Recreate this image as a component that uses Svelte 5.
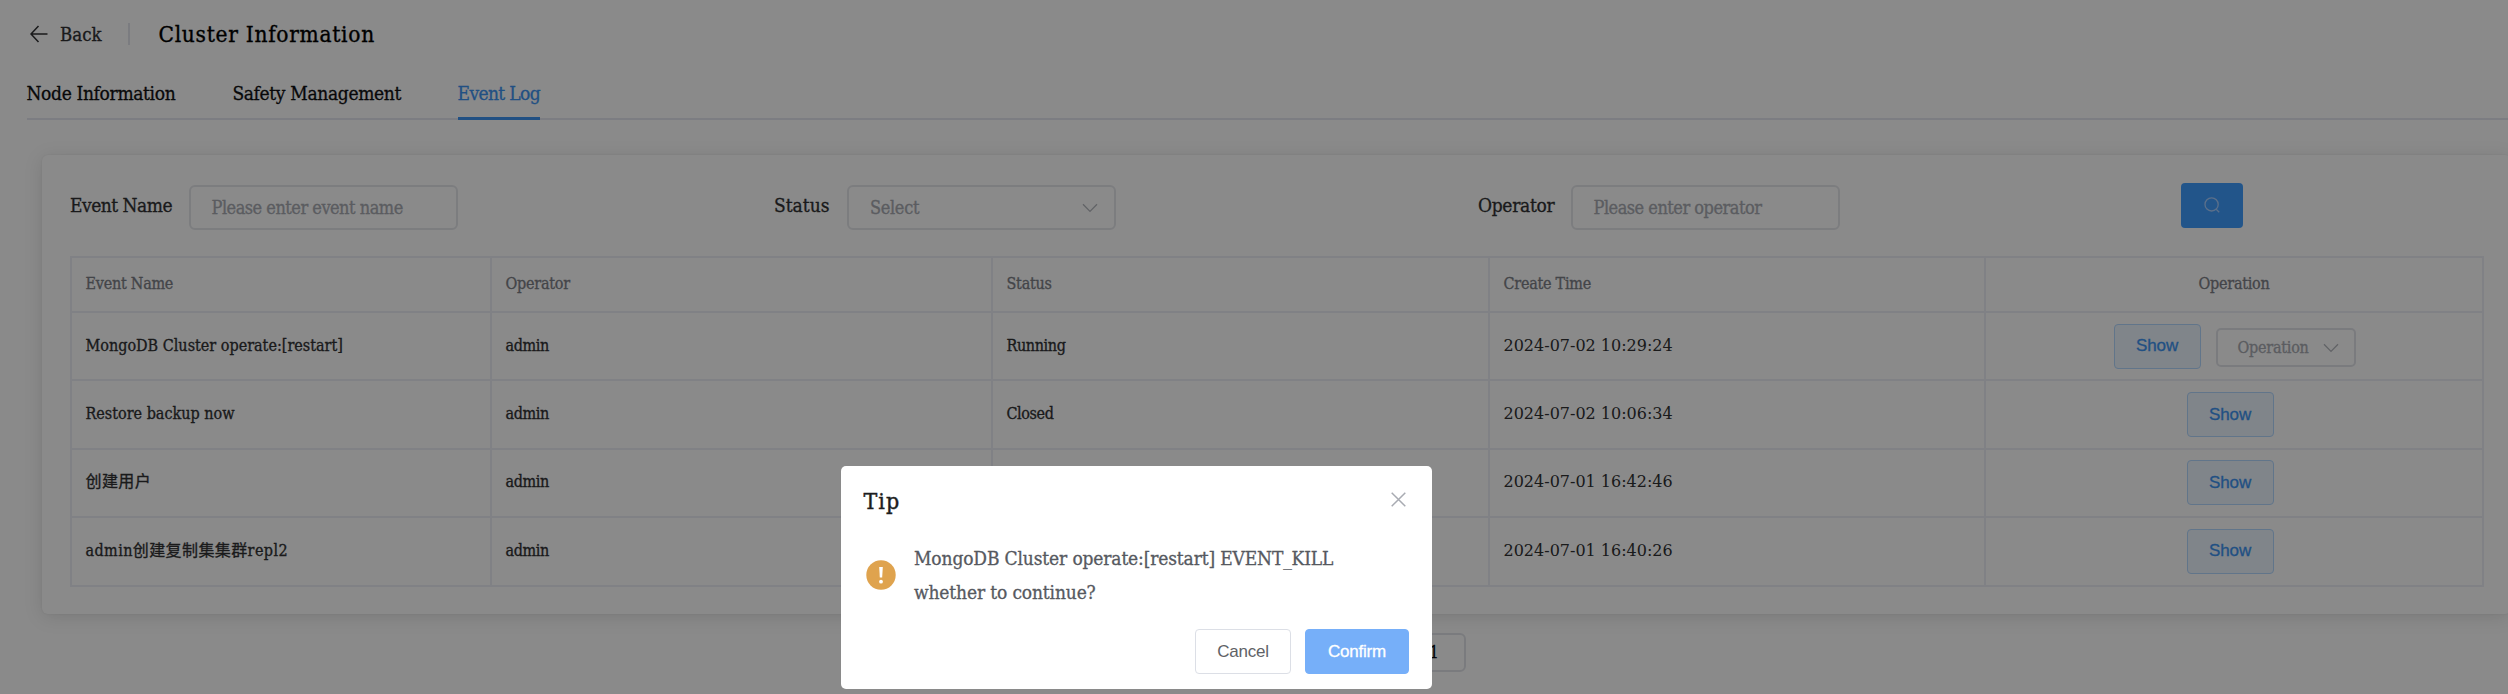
<script>
  const tabs = ['Node Information', 'Safety Management', 'Event Log'];
  const active = 'Event Log';
  const columns = ['Event Name', 'Operator', 'Status', 'Create Time', 'Operation'];
  const events = [
    { name: 'MongoDB Cluster operate:[restart]', operator: 'admin', status: 'Running', time: '2024-07-02 10:29:24', menu: true },
    { name: 'Restore backup now', operator: 'admin', status: 'Closed', time: '2024-07-02 10:06:34' },
    { name: '创建用户', operator: 'admin', time: '2024-07-01 16:42:46', cjk: true },
    { name: 'admin创建复制集集群repl2', operator: 'admin', time: '2024-07-01 16:40:26', cjk: true }
  ];
</script>

{#snippet chevron()}
  <svg class="chevron" viewBox="0 0 16 10"><path d="M1 1.2 8 8.4l7-7.2" /></svg>
{/snippet}

<div class="page">
  <header>
    <svg class="arrow" viewBox="0 0 18 18"><path d="M17.5 9H1M8.5 1 1 9l7.5 8" /></svg>
    <span class="back">Back</span>
    <span class="divider"></span>
    <h1>Cluster Information</h1>
  </header>

  <nav>
    {#each tabs as tab}
      <span class="tab" class:active={tab === active}>{tab}</span>
    {/each}
  </nav>

  <section class="card">
    <div class="filters">
      <div class="field">
        <span class="label name">Event Name</span>
        <div class="box">Please enter event name</div>
      </div>
      <div class="field">
        <span class="label">Status</span>
        <div class="box select">Select {@render chevron()}</div>
      </div>
      <div class="field">
        <span class="label operator">Operator</span>
        <div class="box">Please enter operator</div>
      </div>
      <div class="search">
        <svg viewBox="0 0 16 16"><circle cx="7.6" cy="7.4" r="6.6" /><path d="m12.2 12.2 3 3" /></svg>
      </div>
    </div>

    <div class="table">
      <div class="row head">
        {#each columns as column}<div class="cell">{column}</div>{/each}
      </div>
      {#each events as event}
        <div class="row">
          <div class="cell" class:cjk={event.cjk}>{event.name}</div>
          <div class="cell short">{event.operator}</div>
          <div class="cell short">{event.status ?? ''}</div>
          <div class="cell time">{event.time}</div>
          <div class="cell actions" class:single={!event.menu}>
            <span class="show">Show</span>
            {#if event.menu}
              <span class="menu">Operation {@render chevron()}</span>
            {/if}
          </div>
        </div>
      {/each}
    </div>
  </section>

  <div class="pager"><span>1</span></div>
</div>

<div class="mask">
  <div class="dialog">
    <div class="top">
      <h2>Tip</h2>
      <svg class="close" viewBox="0 0 15 15"><path d="m.7.7 13.6 13.6M14.3.7.7 14.3" /></svg>
    </div>
    <div class="message">
      <svg class="warn" viewBox="0 0 30 30">
        <circle cx="15" cy="15" r="14.7" />
        <path d="M13.2 7h3.6l-.6 10.6h-2.4z" /><circle class="dot" cx="15" cy="21.7" r="1.9" />
      </svg>
      <p>MongoDB Cluster operate:[restart] EVENT_KILL<br />whether to continue?</p>
    </div>
    <div class="buttons">
      <span class="btn">Cancel</span>
      <span class="btn primary">Confirm</span>
    </div>
  </div>
</div>

<style>
  :global(body) { background: #fff; overflow: hidden; }
  * { box-sizing: border-box; }
  svg { display: block; flex: none; fill: none; stroke: currentColor; }
  .page, .mask {
    height: 694px;
    font-family: "DejaVu Serif Condensed", "Noto Sans CJK SC", serif;
    white-space: nowrap;
    -webkit-text-stroke: 0.3px;
  }
  .page { overflow: hidden; color: #303133; }

  header { display: flex; align-items: center; height: 68px; padding-left: 30px; }
  .arrow { width: 18px; height: 18px; stroke-width: 1.5; }
  .back { margin-left: 12px; font-size: 18.5px; width: 57px; }
  .divider { width: 2px; height: 22px; margin-left: 11px; background: #e4e6ec; }
  h1 { margin: 0 0 0 28.5px; font-size: 22.5px; font-weight: 400; letter-spacing: 0.7px; color: #000; -webkit-text-stroke: 0.35px #000; }

  nav { display: flex; gap: 57px; height: 52px; margin-left: 26.5px; border-bottom: 2px solid #e6e8f0; }
  .tab { height: 52px; padding-top: 9px; font-size: 19px; line-height: 32px; letter-spacing: -0.34px; color: #101012; }
  .active { margin-left: -0.5px; color: #3d94f2; letter-spacing: -0.62px; border-bottom: 3px solid #3d94f2; }

  .card {
    width: 2469px; height: 459px; margin: 35px 0 0 42px; padding: 28px 28px 0;
    border-radius: 6px; box-shadow: 0 3px 19px rgba(0, 0, 0, 0.12), 0 0 2px rgba(0, 0, 0, 0.08);
  }
  .filters { display: grid; grid-template-columns: 704px 704px 703px 1fr; align-items: start; height: 73px; }
  .field { display: flex; padding-top: 2px; }
  .label { flex: none; margin: 5px 18px 0 0; font-size: 19px; line-height: 30px; letter-spacing: 0; }
  .label.name { width: 101px; letter-spacing: -0.5px; }
  .label.operator { width: 76px; margin-right: 17px; letter-spacing: -0.3px; }
  .box {
    display: flex; align-items: center; width: 269px; height: 45px; padding: 0 16px 0 20.5px;
    border: 2px solid #e6e7eb; border-radius: 6px;
    font-size: 18px; letter-spacing: -0.5px; color: #a8abb2;
  }
  .select { justify-content: space-between; letter-spacing: -0.3px; }
  .chevron { width: 16px; height: 10px; stroke-width: 1.3; color: #b4b7be; }
  .search {
    display: flex; align-items: center; justify-content: center;
    width: 62px; height: 45px; border-radius: 4px; background: #409eff; color: #a8ceff;
  }
  .search svg { width: 16px; height: 16px; margin-bottom: 2px; stroke-width: 1.3; }

  .table { width: 2414px; border: solid #edeff6; border-width: 2px 0 0 2px; }
  .row { display: grid; grid-template-columns: 420px 501px 497px 496px 498px; height: 68.4px; font-size: 16px; }
  .cell { display: flex; align-items: center; padding: 0 0 2px 13.5px; border: solid #edeff6; border-width: 0 2px 2px 0; }
  .head { height: 55px; color: #7d8087; letter-spacing: -0.25px; }
  .head .cell:last-child { justify-content: center; padding-left: 0; }
  .short { letter-spacing: -0.4px; }
  .cjk { padding-bottom: 5px; letter-spacing: 0.4px; }
  .time { font-family: "DejaVu Serif", serif; -webkit-text-stroke: 0; }
  .actions { justify-content: center; gap: 15px; padding: 0 0 0 1px; }
  .single { padding: 0 8px 0 0; }
  .show, .btn {
    display: flex; align-items: center; justify-content: center; height: 45px;
    border: 1.6px solid #b3d8ff; border-radius: 4px; font-family: "Liberation Sans", sans-serif;
  }
  .show { width: 87px; background: #ecf5ff; color: #3d94f2; font-size: 17px; letter-spacing: -0.1px; }
  .menu {
    display: flex; align-items: center; justify-content: space-between; width: 140px; height: 39px; margin-top: 3px;
    padding: 0 15px 0 20px; border: 2px solid #e2e4e9; border-radius: 5px; letter-spacing: -0.25px; color: #a8abb2;
  }

  .pager { display: flex; justify-content: flex-end; width: 1466px; margin-top: 19px; }
  .pager span {
    width: 64px; height: 39px; border: 2px solid #e2e4e9; border-radius: 6px;
    font-size: 16px; line-height: 35px; text-align: center; color: #000;
  }

  .mask { position: absolute; inset: 0; display: flex; justify-content: center; align-items: flex-end; overflow: hidden; background: rgba(0, 0, 0, 0.46); }
  .dialog { width: 591px; height: 223px; margin: 0 235px 5px 0; padding: 24px 23px 16px 22.5px; border-radius: 5px; background: #fff; }
  .top { display: flex; justify-content: space-between; height: 58px; padding-right: 3px; }
  h2 { margin: 0; font-size: 23px; font-weight: 400; line-height: 22px; letter-spacing: 1px; color: #1c1d20; -webkit-text-stroke: 0.4px; }
  .close { width: 15px; height: 15px; margin-top: 2px; color: #a8abb2; stroke-width: 1.5; }
  .message { display: flex; align-items: center; height: 81px; padding: 0 0 26px 2px; }
  .warn { width: 30px; height: 30px; margin-top: -1px; fill: #dfa34e; stroke: none; }
  .warn path, .dot { fill: #fff; }
  p { margin: 0 0 0 18.5px; font-size: 19px; line-height: 33.5px; letter-spacing: -0.14px; color: #565960; }
  .buttons { display: flex; justify-content: flex-end; gap: 14px; }
  .btn { width: 96px; border-color: #dcdfe6; font-size: 17px; letter-spacing: -0.2px; color: #606266; -webkit-text-stroke: 0; }
  .primary { width: 104px; border-color: #76aff9; background: #76aff9; color: #fff; -webkit-text-stroke: 0.3px; }
</style>
